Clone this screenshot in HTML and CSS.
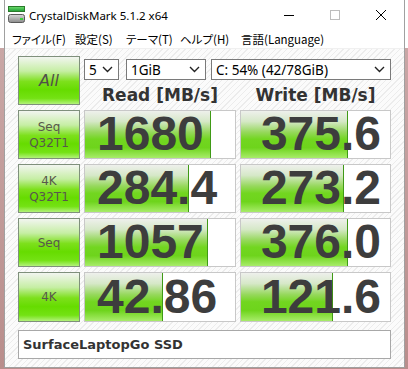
FILE: index.html
```html
<!DOCTYPE html>
<html lang="ja">
<head>
  <meta charset="UTF-8">
  <title>CrystalDiskMark 5.1.2 x64</title>
  <link rel="stylesheet" href="styles.css">
</head>
<body>
  <div class="window">
    <div class="titlebar">
      <svg class="app-icon" width="17" height="17" viewBox="0 0 17 17">
        <defs>
          <linearGradient id="g1" x1="0" y1="0" x2="0" y2="1">
            <stop offset="0" stop-color="#6fe06f"/>
            <stop offset="1" stop-color="#1f9a35"/>
          </linearGradient>
          <linearGradient id="g2" x1="0" y1="0" x2="0" y2="1">
            <stop offset="0" stop-color="#d8d8d8"/>
            <stop offset="1" stop-color="#8a8a8a"/>
          </linearGradient>
        </defs>
        <rect x="0.5" y="0.5" width="16" height="5" fill="url(#g1)" stroke="#2a7a2a"/>
        <rect x="0.5" y="8.5" width="16" height="8" rx="2" fill="url(#g2)" stroke="#5a5a5a"/>
        <rect x="12" y="12" width="3" height="2" fill="#3ccf3c"/>
      </svg>
      <span class="title">CrystalDiskMark 5.1.2 x64</span>
      <div class="controls">
        <span class="ctl">
          <svg width="12" height="12" viewBox="0 0 12 12"><path d="M1 6.5h10" stroke="#000" stroke-width="1"/></svg>
        </span>
        <span class="ctl">
          <svg width="12" height="12" viewBox="0 0 12 12"><rect x="1.5" y="1.5" width="9" height="9" fill="none" stroke="#bdbdbd"/></svg>
        </span>
        <span class="ctl">
          <svg width="12" height="12" viewBox="0 0 12 12"><path d="M1 1l10 10M11 1L1 11" stroke="#000" stroke-width="1"/></svg>
        </span>
      </div>
    </div>

    <div class="menubar">
      <span class="menu m-file">ファイル(F)</span>
      <span class="menu m-settings">設定(S)</span>
      <span class="menu m-theme">テーマ(T)</span>
      <span class="menu m-help">ヘルプ(H)</span>
      <span class="menu">言語(Language)</span>
    </div>

    <div class="client">
      <div class="board">
        <div class="label all">All</div>
        <div class="head">
          <div class="selects">
            <div class="select s-count">5<svg class="chev" width="11" height="7" viewBox="0 0 11 7"><path d="M1 1l4.5 4.5L10 1" fill="none" stroke="#222" stroke-width="1.4"/></svg></div>
            <div class="select s-size">1GiB<svg class="chev" width="11" height="7" viewBox="0 0 11 7"><path d="M1 1l4.5 4.5L10 1" fill="none" stroke="#222" stroke-width="1.4"/></svg></div>
            <div class="select s-drive">C: 54% (42/78GiB)<svg class="chev" width="11" height="7" viewBox="0 0 11 7"><path d="M1 1l4.5 4.5L10 1" fill="none" stroke="#222" stroke-width="1.4"/></svg></div>
          </div>
          <div class="titles">
            <div class="col-title">Read [MB/s]</div>
            <div class="col-title">Write [MB/s]</div>
          </div>
        </div>

        <!-- Seq Q32T1 -->
        <div class="label">Seq<br>Q32T1</div>
        <div class="cell read"><div class="bar" style="width:125px"></div><span class="num">1680</span></div>
        <div class="cell write"><div class="bar" style="width:106px"></div><span class="num">375.6</span></div>

        <!-- 4K Q32T1 -->
        <div class="label">4K<br>Q32T1</div>
        <div class="cell read"><div class="bar" style="width:103px"></div><span class="num">284.4</span></div>
        <div class="cell write"><div class="bar" style="width:102px"></div><span class="num">273.2</span></div>

        <!-- Seq -->
        <div class="label">Seq</div>
        <div class="cell read"><div class="bar" style="width:122px"></div><span class="num">1057</span></div>
        <div class="cell write"><div class="bar" style="width:106px"></div><span class="num">376.0</span></div>

        <!-- 4K -->
        <div class="label">4K</div>
        <div class="cell read"><div class="bar" style="width:77px"></div><span class="num">42.86</span></div>
        <div class="cell write"><div class="bar" style="width:91px"></div><span class="num">121.6</span></div>
      </div>

      <div class="comment">SurfaceLaptopGo SSD</div>
    </div>
  </div>
</body>
</html>
```

FILE: styles.css
```css
/* Page */
body {
  margin: 0;
  width: 408px;
  height: 369px;
  overflow: hidden;
  background: linear-gradient(to bottom, #ffffff 0, #ffffff 48px, #c9a7a6 48px, #b98e8c 100%);
}

.window {
  margin-left: 4px;
  width: 401px;
  height: 368px;
  box-sizing: border-box;
  border: 1px solid #a0a0a0;
  border-top: none;
  background: #fff;
  display: flex;
  flex-direction: column;
}

/* Title bar */
.titlebar {
  height: 30px;
  display: flex;
  align-items: center;
  padding-left: 3px;
  background: #fff;
}

.app-icon {
  margin-top: -1px;
}

.title {
  margin-left: 4px;
  font-family: "Noto Sans", sans-serif;
  font-size: 11.5px;
  color: #000;
}

.controls {
  margin-left: auto;
  display: flex;
  height: 30px;
}

.ctl {
  width: 46px;
  display: flex;
  align-items: center;
  justify-content: center;
}

/* Menu */
.menubar {
  height: 18px;
  display: flex;
  align-items: center;
  padding-left: 7px;
  font-family: "Noto Sans CJK JP", sans-serif;
  font-size: 11.5px;
  font-feature-settings: "palt";
  color: #000;
  border-bottom: 1px solid #f0f0f0;
}

.menu {
  white-space: nowrap;
}

.m-file { width: 63px; }
.m-settings { width: 51px; }
.m-theme { width: 54px; }
.m-help { width: 61px; }

/* Client area */
.client {
  flex: 1;
  padding: 7px 0 0 13px;
  background-color: #f9f9f9;
  background-image: repeating-linear-gradient(135deg, #fbfbfb 0, #fbfbfb 3px, #ececec 3px, #ececec 4px);
}

.board {
  display: grid;
  grid-template-columns: 62px 152px 151px;
  grid-template-rows: 49px 49px 49px 49px 50px;
  column-gap: 4px;
  row-gap: 5px;
}

.label {
  box-sizing: border-box;
  border: 1px solid #7f907c;
  background: linear-gradient(to bottom, #f2f5f0 0%, #c6eea4 30%, #7de01c 52%, #66dc00 70%, #74e214 88%, #b2f27a 100%);
  display: flex;
  align-items: center;
  justify-content: center;
  text-align: center;
  font-family: "DejaVu Sans", sans-serif;
  font-size: 12px;
  line-height: 16px;
  color: #58584c;
}

.label.all {
  font-size: 16px;
  font-style: italic;
  color: #50504a;
}

.head {
  grid-column: 2 / 4;
  display: flex;
  flex-direction: column;
}

.selects {
  display: flex;
  margin-top: 3px;
  height: 21px;
}

.select {
  box-sizing: border-box;
  height: 21px;
  border: 1px solid #7a7a7a;
  background: #fff;
  display: flex;
  align-items: center;
  padding-left: 4px;
  font-family: "Noto Sans", sans-serif;
  font-size: 13.5px;
  color: #000;
  position: relative;
}

.chev {
  position: absolute;
  right: 5px;
  top: 6px;
}

.s-count { width: 35px; margin-right: 7px; }
.s-size { width: 80px; margin-right: 5px; }
.s-drive { width: 180px; }

.titles {
  display: grid;
  grid-template-columns: 152px 151px;
  column-gap: 4px;
  margin-top: 5px;
}

.col-title {
  text-align: center;
  font-family: "DejaVu Sans", sans-serif;
  font-weight: bold;
  font-size: 17px;
  color: #333;
}

/* Result cells */
.cell {
  position: relative;
  box-sizing: border-box;
  border: 1px solid #c8c8c8;
  background: #fff;
  display: flex;
  align-items: center;
}

.bar {
  position: absolute;
  left: 0;
  top: 0;
  bottom: 0;
  border-right: 1px solid #3f9a16;
  background: linear-gradient(to bottom, #eef0ec 0%, #d6e8c8 22%, #96d85c 45%, #72d620 60%, #6ed41c 78%, #a8ec6a 100%);
}

.num {
  position: relative;
  font-family: "Liberation Sans", sans-serif;
  font-weight: bold;
  font-size: 48px;
  line-height: 47px;
  margin-top: -2px;
  color: #3d3d3d;
}

.read {
  justify-content: flex-start;
  padding-left: 12px;
}

.write {
  justify-content: flex-end;
  padding-right: 9px;
}

.comment {
  box-sizing: border-box;
  margin-top: 8px;
  width: 373px;
  height: 29px;
  border: 1px solid #a8a8a8;
  background: #fff;
  display: flex;
  align-items: center;
  padding-left: 4px;
  font-family: "DejaVu Sans", sans-serif;
  font-weight: bold;
  font-size: 13px;
  color: #333;
}
```
